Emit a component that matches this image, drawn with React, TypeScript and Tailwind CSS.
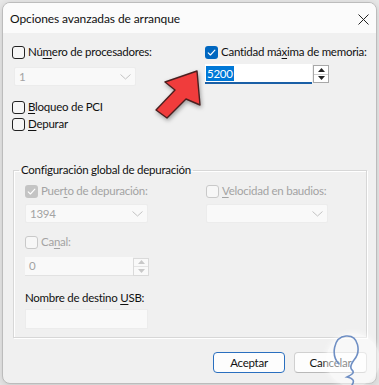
import React from "react"

function Box({ checked, disabled }: { checked?: boolean; disabled?: boolean }) {
  if (checked) {
    return (
      <span
        className={`w-[13px] h-[13px] rounded-[3px] flex items-center justify-center shrink-0 ${
          disabled ? "bg-[#c4c4c4]" : "bg-[#0067c0]"
        }`}
      >
        <svg width="13" height="13" viewBox="0 0 13 13">
          <path d="M3.2 6.8 5.4 9 9.9 4.2" fill="none" stroke="#fff" strokeWidth="1.1" strokeLinecap="round" strokeLinejoin="round" />
        </svg>
      </span>
    )
  }
  return (
    <span
      className={`w-[13px] h-[13px] rounded-[3px] border shrink-0 ${
        disabled ? "border-[#c9c9c9] bg-[#f7f7f7]" : "border-[#222] bg-[#f6f6f6]"
      }`}
    />
  )
}

function Check({ checked, disabled, children }: { checked?: boolean; disabled?: boolean; children: React.ReactNode }) {
  return (
    <div className={`h-[16px] flex items-center gap-[3px] ${disabled ? "text-[#a3a3a3]" : "text-[#111]"}`}>
      <Box checked={checked} disabled={disabled} />
      <span className="leading-[16px] whitespace-nowrap">{children}</span>
    </div>
  )
}

function U({ children }: { children: React.ReactNode }) {
  return <span className="underline underline-offset-[2px] decoration-1">{children}</span>
}

function Chevron() {
  return (
    <svg width="11" height="6" viewBox="0 0 11 6">
      <path d="M0.5 0.5 5.5 5 10.5 0.5" fill="none" stroke="#c2c2c2" strokeWidth="1" />
    </svg>
  )
}

function Combo({ value, w }: { value?: string; w: string }) {
  return (
    <div className={`${w} h-[19px] bg-[#f9f9f9] border border-[#ececec] rounded-[2px] flex items-center justify-between pl-[4px] pr-[4px] text-[#a3a3a3]`}>
      <span className="leading-[16px]">{value}</span>
      <Chevron />
    </div>
  )
}

function Tri({ up, color }: { up?: boolean; color: string }) {
  return (
    <svg width="7" height="4" viewBox="0 0 7 4">
      <path d={up ? "M0 4 3.5 0 7 4Z" : "M0 0 3.5 4 7 0Z"} fill={color} />
    </svg>
  )
}

function Spinner({ disabled }: { disabled?: boolean }) {
  const c = disabled ? "#c8c8c8" : "#222"
  return (
    <div
      className={`w-[16px] h-[18px] flex flex-col border ${
        disabled ? "border-[#dadada] bg-[#f9f9f9]" : "border-[#a8a8a8] bg-white"
      }`}
    >
      <div className="flex-1 flex items-center justify-center">
        <Tri up color={c} />
      </div>
      <div className={`h-px ${disabled ? "bg-[#e4e4e4]" : "bg-[#cfcfcf]"}`} />
      <div className="flex-1 flex items-center justify-center">
        <Tri color={c} />
      </div>
    </div>
  )
}

export default function App() {
  return (
    <div className="w-[379px] h-[385px] bg-[#e8e8e8] relative overflow-hidden font-['Lato',sans-serif] text-[11.5px] tracking-[-0.25px]">
      <div className="ml-[2px] mt-[2px] w-[375px] h-[382px] rounded-[8px] border border-[#bcbcbc] overflow-hidden flex flex-col bg-[#f0f0f0] shadow-[0_2px_8px_rgba(0,0,0,0.15)]">
        {/* title bar */}
        <div className="h-[30px] shrink-0 bg-[#fbfbfb] flex items-center justify-between pl-[7px] pr-[7px]">
          <span className="text-[#111] text-[12px] tracking-[-0.1px] leading-[16px] mt-[2px]">Opciones avanzadas de arranque</span>
          <svg width="11" height="11" viewBox="0 0 11 11" className="mt-[2px]">
            <path d="M0.5 0.5 10.5 10.5M10.5 0.5 0.5 10.5" stroke="#222" strokeWidth="1" />
          </svg>
        </div>

        {/* body */}
        <div className="flex-1 pl-[9px] pr-[8px] pt-[11px]">
          <div className="grid grid-cols-[193px_1fr]">
            <div>
              <Check>
                Nú<U>m</U>ero de procesadores:
              </Check>
              <div className="mt-[7px] ml-[2px]">
                <Combo value="1" w="w-[122px]" />
              </div>
              <div className="mt-[13px]">
                <Check>
                  <U>B</U>loqueo de PCI
                </Check>
              </div>
              <div className="mt-[1px]">
                <Check>
                  <U>D</U>epurar
                </Check>
              </div>
            </div>
            <div>
              <Check checked>
                Cantidad má<U>x</U>ima de memoria:
              </Check>
              <div className="mt-[4px] flex items-center gap-[1px]">
                <div className="w-[107px] h-[20px] bg-white border-b-2 border-[#1a5fa6] flex items-center pl-[1px]">
                  <span className="bg-[#0078d7] text-white leading-[15px] px-[1px]">5200</span>
                </div>
                <Spinner />
              </div>
            </div>
          </div>

          <fieldset className="mt-[30px] ml-[1px] w-[354px] border border-[#d7d7d7] shadow-[1px_1px_0_#fff,inset_1px_1px_0_#fff] px-[5px] pb-[8px]">
            <legend className="px-[2px] leading-[16px] text-[#111]">Configuración global de depuración</legend>
            <div className="pl-[6px]">
              <div className="grid grid-cols-[181px_1fr] mt-[5px]">
                <div>
                  <Check checked disabled>
                    Puer<U>t</U>o de depuración:
                  </Check>
                  <div className="mt-[5px]">
                    <Combo value="1394" w="w-[123px]" />
                  </div>
                </div>
                <div>
                  <Check disabled>
                    <U>V</U>elocidad en baudios:
                  </Check>
                  <div className="mt-[5px]">
                    <Combo w="w-[122px]" />
                  </div>
                </div>
              </div>
              <div className="mt-[11px]">
                <Check disabled>
                  Ca<U>n</U>al:
                </Check>
              </div>
              <div className="mt-[7px] flex items-center">
                <div className="w-[108px] h-[19px] bg-[#f9f9f9] border-b border-[#e2e2e2] flex items-center pl-[4px] text-[#a3a3a3] leading-[16px]">
                  0
                </div>
                <Spinner disabled />
              </div>
              <div className="mt-[14px] h-[16px] leading-[16px] text-[#111]">
                Nombre de destino <U>U</U>SB:
              </div>
              <div className="mt-[3px] w-[123px] h-[20px] bg-[#f9f9f9] border border-[#ececec]" />
            </div>
          </fieldset>

          <div className="mt-[14px] flex justify-end gap-[9px] mr-[1px]">
            <button className="w-[72px] h-[21px] bg-[#fdfdfd] border border-[#2a6fbf] rounded-[4px] text-[#111] leading-[16px]">
              Aceptar
            </button>
            <button className="w-[73px] h-[21px] bg-[#fdfdfd] border border-[#d0d0d0] border-b-[#b8b8b8] rounded-[4px] text-[#111] leading-[16px]">
              Cancelar
            </button>
          </div>
        </div>
      </div>

      {/* red arrow */}
      <svg
        className="absolute left-[150px] top-[62px] drop-shadow-[1px_2px_2px_rgba(0,0,0,0.35)]"
        width="56"
        height="62"
        viewBox="0 0 56 62"
      >
        <path
          d="M47 9 15 20 25 28 6 48 17 56 36 37 50 43Z"
          fill="#f03c3c"
          stroke="#4a1f1f"
          strokeWidth="1.4"
          strokeLinejoin="round"
        />
      </svg>

      {/* watermark */}
      <div className="absolute left-[326px] top-[333px] w-[54px] h-[54px] rounded-full bg-white/50 shadow-[0_0_6px_rgba(255,255,255,0.7)]" />
      <svg className="absolute left-[324px] top-[330px]" width="55" height="55" viewBox="0 0 55 55">
        <path
          d="M15 34 C7 26 9 7 22 6 C35 5 37 22 30 30 C27 34 26 38 28 40 C32 43 25 46 23 47 C29 48 31 51 28 55"
          fill="none"
          stroke="#6f8fc4"
          strokeWidth="1.6"
          strokeLinecap="round"
        />
      </svg>
    </div>
  )
}
